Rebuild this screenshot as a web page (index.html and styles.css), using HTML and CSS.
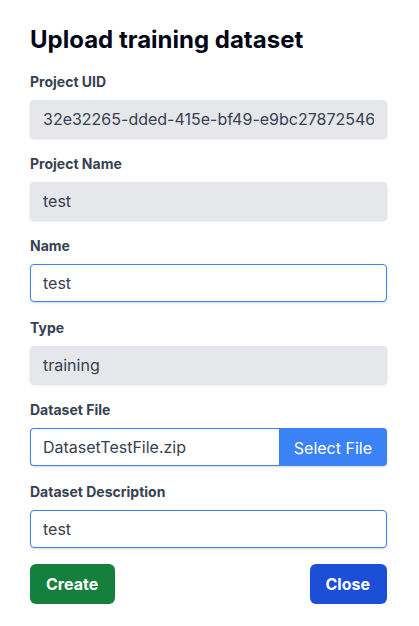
FILE: index.html
```html
<!DOCTYPE html>
<html lang="en">
<head>
<meta charset="utf-8">
<meta name="viewport" content="width=device-width, initial-scale=1">
<title>Upload training dataset</title>
<link rel="stylesheet" href="styles.css">
</head>
<body>
<form class="form">
  <h1 class="title">Upload training dataset</h1>
  <div class="field">
    <label class="label" for="uid">Project UID</label>
    <input class="input" id="uid" type="text" value="32e32265-dded-415e-bf49-e9bc27872546" disabled>
  </div>
  <div class="field">
    <label class="label" for="project">Project Name</label>
    <input class="input" id="project" type="text" value="test" disabled>
  </div>
  <div class="field">
    <label class="label" for="name">Name</label>
    <input class="input" id="name" type="text" value="test">
  </div>
  <div class="field">
    <label class="label" for="type">Type</label>
    <input class="input" id="type" type="text" value="training" disabled>
  </div>
  <div class="field">
    <label class="label" for="file">Dataset File</label>
    <div class="file">
      <input class="input file-name" id="file" type="text" value="DatasetTestFile.zip" readonly>
      <button class="file-button" type="button">Select File</button>
    </div>
  </div>
  <div class="field">
    <label class="label" for="description">Dataset Description</label>
    <input class="input" id="description" type="text" value="test">
  </div>
  <div class="actions">
    <button class="button create" type="submit">Create</button>
    <button class="button close" type="button">Close</button>
  </div>
</form>
</body>
</html>
```
FILE: styles.css
```css
* {
  box-sizing: border-box;
}

body {
  margin: 0;
  background: #fff;
  color: #020617;
  font-family: Inter, sans-serif;
  font-size: 16px;
  line-height: 24px;
}

.form {
  padding: 24px 32px 24px 30px;
}

.title {
  margin: 0 0 16px;
  font-size: 24px;
  line-height: 32px;
  font-weight: 700;
}

.field {
  margin-bottom: 16px;
}

.label {
  display: block;
  margin-bottom: 8px;
  color: #374151;
  font-size: 14px;
  line-height: 20px;
  font-weight: 700;
}

.input {
  display: block;
  width: 100%;
  height: 38px;
  margin: 0;
  padding: 0 12px;
  border: 1px solid #3b82f6;
  border-radius: 4px;
  background: #fff;
  color: #374151;
  font: inherit;
  box-shadow: 0 1px 3px rgb(0 0 0 / 10%), 0 1px 2px rgb(0 0 0 / 6%);
}

.input:disabled {
  border-color: #e5e7eb;
  background: #e5e7eb;
}

.file {
  display: flex;
  border-radius: 4px;
  box-shadow: 0 1px 3px rgb(0 0 0 / 10%), 0 1px 2px rgb(0 0 0 / 6%);
}

.file-name {
  flex: 1;
  min-width: 0;
  border-right: 0;
  border-radius: 4px 0 0 4px;
  box-shadow: none;
}

.file-button {
  padding: 2px 15px 0;
  border: 0;
  border-radius: 0 4px 4px 0;
  background: #3b82f6;
  color: #fff;
  font: inherit;
}

.actions {
  display: flex;
  justify-content: space-between;
}

.button {
  padding: 8px 17px 8px 16px;
  border: 0;
  border-radius: 6px;
  color: #fff;
  font: inherit;
  font-weight: 700;
}

.create {
  background: #15803d;
}

.close {
  background: #1d4ed8;
}
```
